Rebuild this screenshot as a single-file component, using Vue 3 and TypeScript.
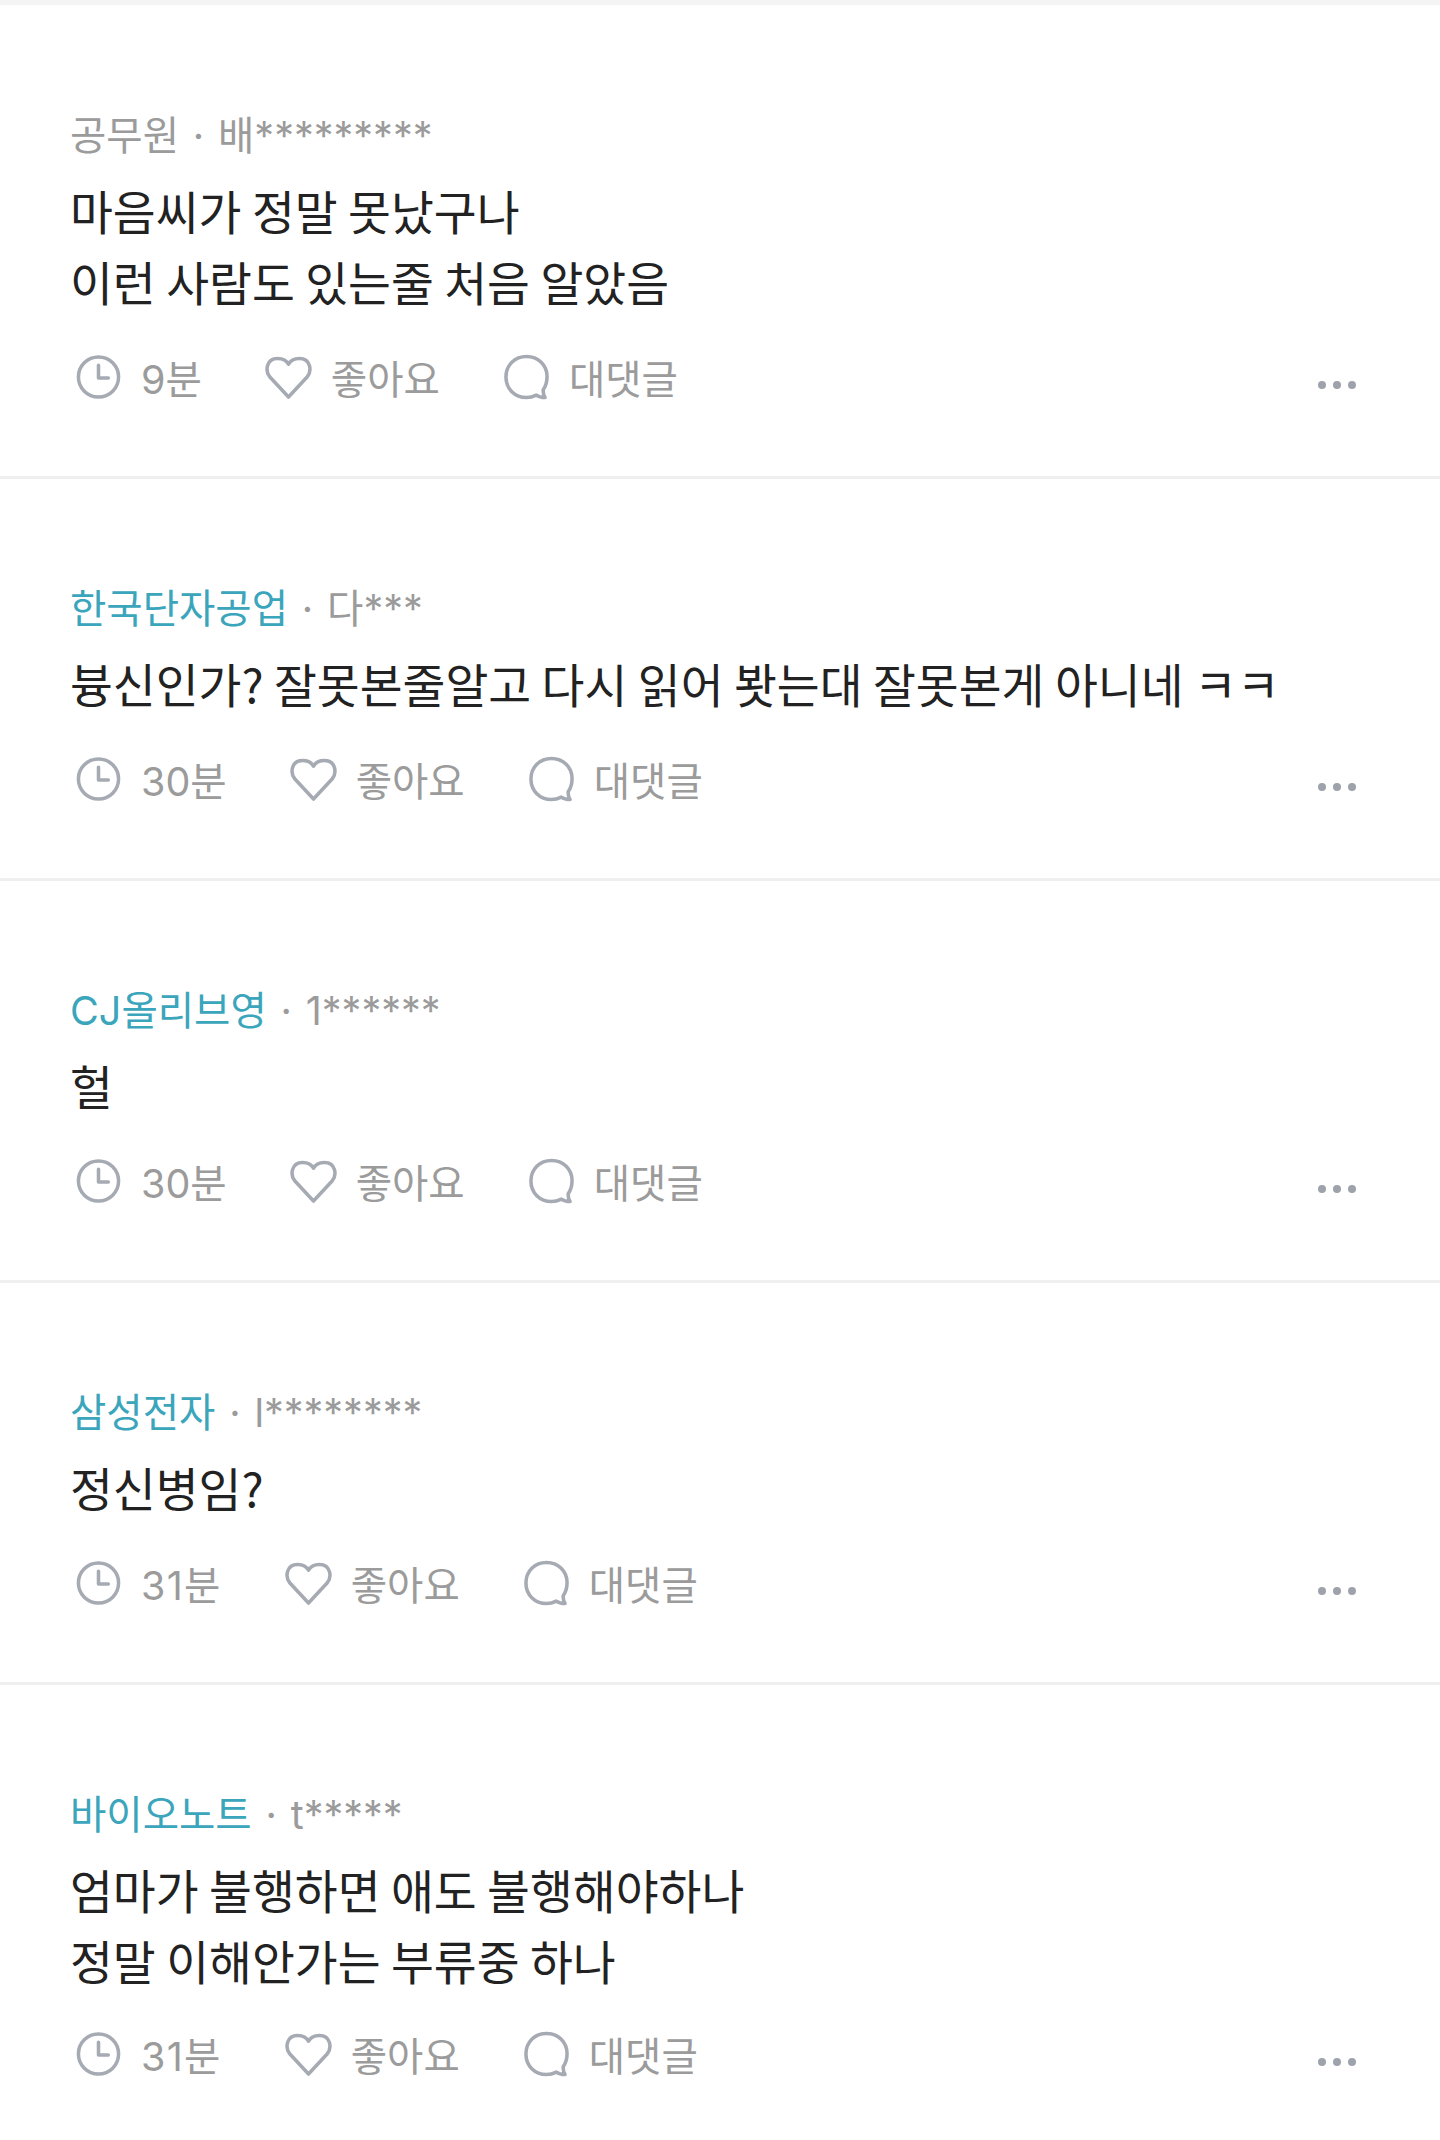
<script setup lang="ts">
interface Row {
  company: string
  verified: boolean
  user: string
  lines: string[]
  time: string
}
const rows: Row[] = [
  { company: '공무원', verified: false, user: '배*********', lines: ['마음씨가 정말 못났구나', '이런 사람도 있는줄 처음 알았음'], time: '9분' },
  { company: '한국단자공업', verified: true, user: '다***', lines: ['븅신인가? 잘못본줄알고 다시 읽어 봣는대 잘못본게 아니네 ㅋㅋ'], time: '30분' },
  { company: 'CJ올리브영', verified: true, user: '1******', lines: ['헐'], time: '30분' },
  { company: '삼성전자', verified: true, user: 'l********', lines: ['정신병임?'], time: '31분' },
  { company: '바이오노트', verified: true, user: 't*****', lines: ['엄마가 불행하면 애도 불행해야하나', '정말 이해안가는 부류중 하나'], time: '31분' },
]
</script>

<template>
  <main class="page">
    <article v-for="(row, i) in rows" :key="i" class="row">
      <p class="meta">
        <span :class="{ company: row.verified }">{{ row.company }}</span>
        <span class="sep">·</span>
        <span>{{ row.user }}</span>
      </p>
      <p class="body">
        <span v-for="line in row.lines" :key="line" class="line">{{ line }}</span>
      </p>
      <div class="actions">
        <span class="action">
          <svg class="icon" viewBox="0 0 48 48" fill="none">
            <circle cx="24" cy="24" r="20.500" />
            <path d="M24 12v13h10" />
          </svg>
          <span class="label" :class="{ spaced: row.time === '31분' }">{{ row.time }}</span>
        </span>
        <span class="action">
          <svg class="icon" viewBox="0 0 48 48" fill="none">
            <path d="M24 44.500 5 24C0 18 1 5 13 5c5 0 9 2 11 6 2-4 6-6 11-6 12 0 13 13 8 19L24 44.500Z" />
          </svg>
          <span class="label">좋아요</span>
        </span>
        <span class="action">
          <svg class="icon" viewBox="0 0 48 48" fill="none">
            <path d="M24 3C12 3 3 12 3 24s9 21 21 21c4 0 7-1 10-2.500 2 1.500 6 2.500 9 2.500-1.500-2-2-5-2-8 3-4 4-8.500 4-13.500C45 12 36 3 24 3Z" />
          </svg>
          <span class="label">대댓글</span>
        </span>
        <span class="more" aria-label="더보기"><i></i><i></i><i></i></span>
      </div>
    </article>
  </main>
</template>

<style>
html, body { margin: 0; background: #fff; }
</style>

<style scoped>
.page {
  width: 1440px;
  height: 2140px;
  overflow: hidden;
  background: #fff;
  border-top: 5px solid #f4f4f5;
  box-sizing: border-box;
  font-family: "Noto Sans CJK KR", "Liberation Sans", sans-serif;
}
.row {
  padding: 102px 70px 74px;
  border-bottom: 3px solid #efeff0;
}
.row:first-child { padding-top: 103px; }
.row:last-child { border-bottom: 0; }
.meta {
  margin: 0;
  display: flex;
  box-sizing: border-box;
  height: 50px;
  padding-top: 3px;
  line-height: 50px;
  font-family: Inter, "Noto Sans CJK KR", sans-serif;
  font-size: 39.500px;
  color: #9b9b9b;
}
.company { color: #3ba5bc; }
.sep { width: 39px; text-align: center; }
.body {
  margin: 16px 0 36px;
  font-size: 46.600px;
  line-height: 71px;
  color: #222;
}
.row:last-child .body { margin-bottom: 34px; }
.line { display: block; white-space: nowrap; }
.actions {
  display: flex;
  align-items: center;
  height: 50px;
  padding-left: 5px;
  font-family: Inter, "Noto Sans CJK KR", sans-serif;
  font-size: 39.500px;
  color: #9b9b9b;
}
.action {
  display: flex;
  align-items: center;
  gap: 19px;
  margin-right: 63px;
}
.label { margin-top: -2px; }
.spaced { letter-spacing: 1.300px; }
.icon {
  width: 47px;
  height: 48px;
  stroke: #a5aab3;
  stroke-width: 3.600;
  stroke-linecap: round;
  stroke-linejoin: round;
}
.more {
  margin-left: auto;
  margin-top: 15px;
  margin-right: 14px;
  display: flex;
  gap: 7px;
}
.more i {
  width: 8px;
  height: 8px;
  border-radius: 50%;
  background: #9ea2ab;
}
</style>
